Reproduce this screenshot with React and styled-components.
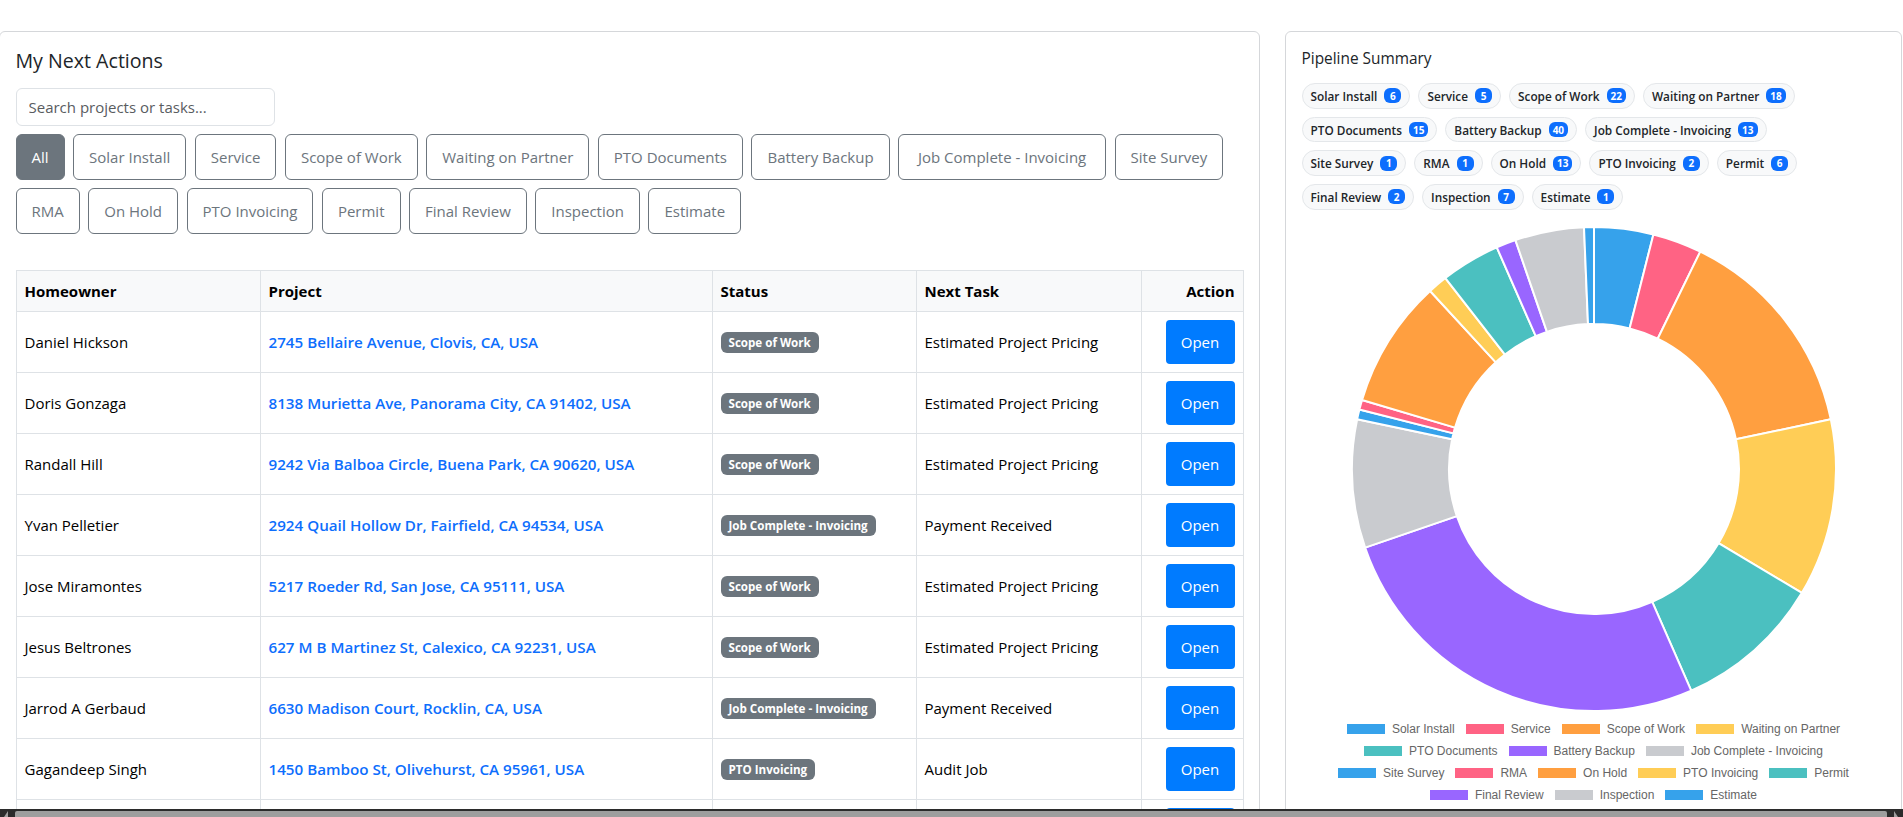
import React from "react";
import styled, { createGlobalStyle } from "styled-components";

const UI = `"Open Sans", "Noto Sans", "Liberation Sans", sans-serif`;

const Global = createGlobalStyle`
  html, body { margin: 0; padding: 0; height: 100%; background: #fff; overflow: hidden; }
  * { box-sizing: border-box; }
  body { font-family: ${UI}; font-size: 15px; color: #212529; }
`;

const Viewport = styled.div`display: flex; flex-direction: column; height: 817px; overflow: hidden;`;
const Scroller = styled.div`flex: 1; min-height: 0; overflow: hidden;`;
const Layout = styled.main`
  display: grid;
  grid-template-columns: 1261px 617px;
  column-gap: 25px;
  margin-left: -1.5px;
  padding-top: 31px;
  align-items: start;
`;
const Card = styled.section`
  background: #fff;
  border: 1px solid #d5d7da;
  border-radius: 6px;
  padding: 16px;
`;
const Title = styled.h5`margin: 0 0 16px; height: 24px; font-size: 19.6px; line-height: 25px; font-weight: 500; color: #212529;`;
const Search = styled.input`
  display: block;
  width: 259px;
  height: 38px;
  padding: 6px 12px;
  border: 1px solid #dee2e6;
  border-radius: 6px;
  font: 400 15px ${UI};
  color: #212529;
  outline: none;
  margin-bottom: 8px;
  &::placeholder { color: #595c5f; opacity: 1; }
`;
const Filters = styled.div`display: flex; flex-wrap: wrap; gap: 8px 8.5px; margin-bottom: 36px;`;
const FilterBtn = styled.button`
  height: 46px;
  min-width: ${p => p.$minWidth || 0}px;
  padding: 0 15px;
  border: 1px solid #6c757d;
  border-radius: 6px;
  font: 400 15px ${UI};
  background: ${p => (p.$active ? "#6c757d" : "#fff")};
  color: ${p => (p.$active ? "#fff" : "#6c757d")};
`;
const Table = styled.table`
  width: 1226.5px;
  border-collapse: collapse;
  table-layout: fixed;
  font-size: 15px;
  color: #000;
  th, td { border: 1px solid #dee2e6; padding: 8px; vertical-align: middle; }
  th { height: 41px; background: #f8f9fa; font-weight: 700; text-align: left; }
  td { height: 61px; }
`;
const ActionHead = styled.th`&& { text-align: right; }`;
const ActionCell = styled.td`&& { text-align: right; }`;
const ProjectLink = styled.a`color: #0d6efd; font-weight: 600; text-decoration: none; font-size: 15.2px;`;
const StatusBadge = styled.span`
  display: inline-block;
  padding: 4px 8px;
  background: #6c757d;
  color: #fff;
  border-radius: 6px;
  font-size: 11.6px;
  line-height: 13px;
  font-weight: 700;
`;
const OpenBtn = styled.button`
  width: 69px;
  height: 44px;
  border: 0;
  border-radius: 4px;
  background: #007bff;
  color: #fff;
  font: 400 15px ${UI};
  vertical-align: middle;
`;
const SideTitle = styled.h6`margin: 0 0 11px; height: 24px; font-size: 15.4px; line-height: 22px; font-weight: 500; color: #212529;`;
const Chips = styled.div`display: flex; flex-wrap: wrap; gap: 8px; margin-bottom: 16px; padding-right: 6px;`;
const Chip = styled.span`
  display: inline-flex;
  align-items: center;
  gap: 7px;
  height: 25.7px;
  padding: 0 8px;
  background: #f8f9fa;
  border: 1px solid #e4e7ea;
  border-radius: 13px;
  font-size: 11.8px;
  font-weight: 600;
  color: #212529;
`;
const Count = styled.span`
  display: inline-flex;
  align-items: center;
  justify-content: center;
  min-width: 17px;
  height: 15px;
  padding: 0 4px;
  background: #0d6efd;
  color: #fff;
  border-radius: 6px;
  font-size: 10px;
  font-weight: 700;
`;
const ChartWrap = styled.div`display: flex; justify-content: center; padding-left: 1px;`;
const Legend = styled.div`
  display: flex;
  flex-wrap: wrap;
  justify-content: center;
  column-gap: 11px;
  width: 570px;
  margin: 6.5px auto 0;
  padding-left: 1px;
  font: 12px/22px "Liberation Sans", Arial, sans-serif;
  color: #666;
`;
const LegendItem = styled.span`display: inline-flex; align-items: center; gap: 7px; height: 22px;`;
const Swatch = styled.i`display: block; width: 38px; height: 10px; background: ${p => p.$c};`;
const Track = styled.div`
  flex: 0 0 8px;
  display: flex;
  align-items: flex-end;
  gap: 6px;
  padding: 0 4px 0 3px;
  background: #2b2b2b;
`;
const Thumb = styled.div`flex: 1; height: 6px; background: #9e9e9e; border-radius: 2px 2px 0 0;`;
const Arrow = styled.svg`display: block; flex: none;`;

const palette = ["#36A2EB", "#FF6384", "#FF9F40", "#FFCD56", "#4BC0C0", "#9966FF", "#C9CBCF"];
const pipeline = [
  ["Solar Install", 6], ["Service", 5], ["Scope of Work", 22], ["Waiting on Partner", 18],
  ["PTO Documents", 15], ["Battery Backup", 40], ["Job Complete - Invoicing", 13], ["Site Survey", 1],
  ["RMA", 1], ["On Hold", 13], ["PTO Invoicing", 2], ["Permit", 6], ["Final Review", 2],
  ["Inspection", 7], ["Estimate", 1],
];
const filterMinWidths = { "Job Complete - Invoicing": 208 };
const rows = [
  ["Daniel Hickson", "2745 Bellaire Avenue, Clovis, CA, USA", "Scope of Work", "Estimated Project Pricing"],
  ["Doris Gonzaga", "8138 Murietta Ave, Panorama City, CA 91402, USA", "Scope of Work", "Estimated Project Pricing"],
  ["Randall Hill", "9242 Via Balboa Circle, Buena Park, CA 90620, USA", "Scope of Work", "Estimated Project Pricing"],
  ["Yvan Pelletier", "2924 Quail Hollow Dr, Fairfield, CA 94534, USA", "Job Complete - Invoicing", "Payment Received"],
  ["Jose Miramontes", "5217 Roeder Rd, San Jose, CA 95111, USA", "Scope of Work", "Estimated Project Pricing"],
  ["Jesus Beltrones", "627 M B Martinez St, Calexico, CA 92231, USA", "Scope of Work", "Estimated Project Pricing"],
  ["Jarrod A Gerbaud", "6630 Madison Court, Rocklin, CA, USA", "Job Complete - Invoicing", "Payment Received"],
  ["Gagandeep Singh", "1450 Bamboo St, Olivehurst, CA 95961, USA", "PTO Invoicing", "Audit Job"],
  ["", "", "", ""],
];

function arc(a0, a1, R, r, cx, cy) {
  const p = (rad, a) => `${(cx + rad * Math.sin(a)).toFixed(2)} ${(cy - rad * Math.cos(a)).toFixed(2)}`;
  const large = a1 - a0 > Math.PI ? 1 : 0;
  return `M${p(R, a0)}A${R} ${R} 0 ${large} 1 ${p(R, a1)}L${p(r, a1)}A${r} ${r} 0 ${large} 0 ${p(r, a0)}Z`;
}

function Doughnut() {
  const total = pipeline.reduce((s, d) => s + d[1], 0);
  let a = 0;
  return (
    <svg width="486" height="486" viewBox="0 0 486 486" role="img" aria-label="Pipeline doughnut chart">
      {pipeline.map(([name, v], i) => {
        const next = a + (v / total) * Math.PI * 2;
        const d = arc(a, next, 242, 145, 243, 243);
        a = next;
        return <path key={name} d={d} fill={palette[i % 7]} stroke="#fff" strokeWidth="2" strokeLinejoin="bevel" />;
      })}
    </svg>
  );
}

export default function App() {
  return (
    <Viewport>
      <Global />
      <Scroller>
        <Layout>
          <Card>
            <Title>My Next Actions</Title>
            <Search placeholder="Search projects or tasks..." />
            <Filters>
              <FilterBtn $active>All</FilterBtn>
              {pipeline.map(([name]) => <FilterBtn key={name} $minWidth={filterMinWidths[name]}>{name}</FilterBtn>)}
            </Filters>
            <Table>
              <colgroup>
                <col style={{ width: 244 }} /><col style={{ width: 452 }} /><col style={{ width: 204 }} />
                <col style={{ width: 225 }} /><col style={{ width: 102 }} />
              </colgroup>
              <thead>
                <tr><th>Homeowner</th><th>Project</th><th>Status</th><th>Next Task</th><ActionHead>Action</ActionHead></tr>
              </thead>
              <tbody>
                {rows.map((r, i) => (
                  <tr key={i}>
                    <td>{r[0]}</td>
                    <td><ProjectLink href="#">{r[1]}</ProjectLink></td>
                    <td>{r[2] && <StatusBadge>{r[2]}</StatusBadge>}</td>
                    <td>{r[3]}</td>
                    <ActionCell><OpenBtn>{r[0] && "Open"}</OpenBtn></ActionCell>
                  </tr>
                ))}
              </tbody>
            </Table>
          </Card>
          <Card>
            <SideTitle>Pipeline Summary</SideTitle>
            <Chips>
              {pipeline.map(([name, v]) => <Chip key={name}>{name}<Count>{v}</Count></Chip>)}
            </Chips>
            <ChartWrap><Doughnut /></ChartWrap>
            <Legend>
              {pipeline.map(([name], i) => (
                <LegendItem key={name}><Swatch $c={palette[i % 7]} />{name}</LegendItem>
              ))}
            </Legend>
          </Card>
        </Layout>
      </Scroller>
      <Track>
        <Arrow width="6" height="8" viewBox="0 0 6 8"><path d="M5 2 1 8h4z" fill="#9e9e9e" /></Arrow>
        <Thumb />
        <Arrow width="6" height="8" viewBox="0 0 6 8"><path d="M1 2l4 6H1z" fill="#9e9e9e" /></Arrow>
      </Track>
    </Viewport>
  );
}
